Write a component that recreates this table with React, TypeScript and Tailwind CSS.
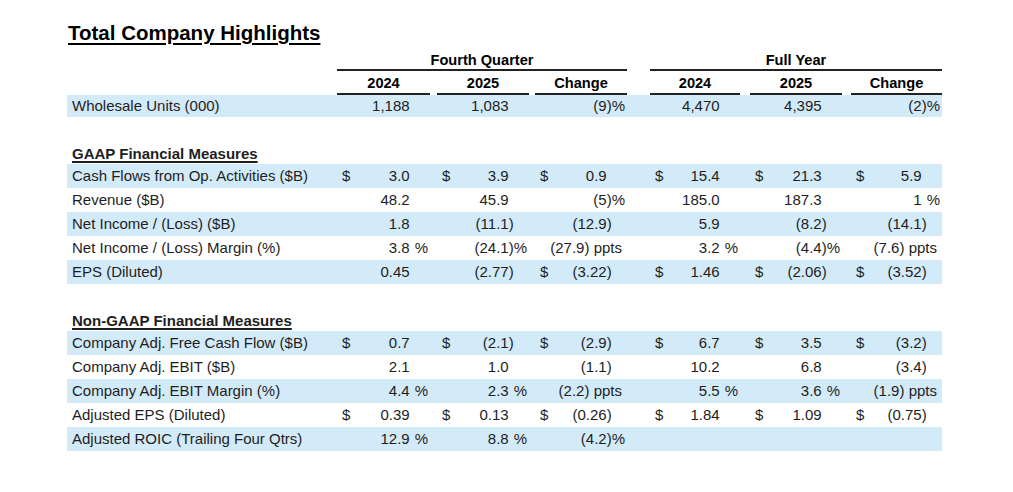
import React from 'react';

const COLS = 'grid grid-cols-[270px_93px_99px_98px_113px_102px_100px]';
const GAPS = ['pl-0', 'pl-[7px]', 'pl-[6px]', 'pl-[23px]', 'pl-[10px]', 'pl-[9px]'];

type Row = { label: string; cells: string[] };

const gaap: Row[] = [
  { label: 'Cash Flows from Op. Activities ($B)', cells: ['$ 3.0', '$ 3.9', '$ 0.9', '$ 15.4', '$ 21.3', '$ 5.9'] },
  { label: 'Revenue ($B)', cells: ['48.2', '45.9', '(5)%', '185.0', '187.3', '1 %'] },
  { label: 'Net Income / (Loss) ($B)', cells: ['1.8', '(11.1)', '(12.9)', '5.9', '(8.2)', '(14.1)'] },
  { label: 'Net Income / (Loss) Margin (%)', cells: ['3.8 %', '(24.1)%', '(27.9) ppts', '3.2 %', '(4.4)%', '(7.6) ppts'] },
  { label: 'EPS (Diluted)', cells: ['0.45', '(2.77)', '$ (3.22)', '$ 1.46', '$ (2.06)', '$ (3.52)'] },
];

const nonGaap: Row[] = [
  { label: 'Company Adj. Free Cash Flow ($B)', cells: ['$ 0.7', '$ (2.1)', '$ (2.9)', '$ 6.7', '$ 3.5', '$ (3.2)'] },
  { label: 'Company Adj. EBIT ($B)', cells: ['2.1', '1.0', '(1.1)', '10.2', '6.8', '(3.4)'] },
  { label: 'Company Adj. EBIT Margin (%)', cells: ['4.4 %', '2.3 %', '(2.2) ppts', '5.5 %', '3.6 %', '(1.9) ppts'] },
  { label: 'Adjusted EPS (Diluted)', cells: ['$ 0.39', '$ 0.13', '$ (0.26)', '$ 1.84', '$ 1.09', '$ (0.75)'] },
  { label: 'Adjusted ROIC (Trailing Four Qtrs)', cells: ['12.9 %', '8.8 %', '(4.2)%', '', '', ''] },
];

function Value({ raw }: { raw: string }) {
  if (!raw) return null;
  let s = raw;
  const dollar = s.startsWith('$');
  if (dollar) s = s.slice(1).trim();
  const ppts = s.endsWith(' ppts');
  if (ppts) s = s.slice(0, -5);
  const pct = s.endsWith('%');
  if (pct) s = s.slice(0, -1).trim();
  const paren = s.endsWith(')');
  if (paren) s = s.slice(0, -1);

  return (
    <div className="flex justify-between whitespace-pre pr-[2px]">
      <span className="pl-[5px]">{dollar ? '$' : ''}</span>
      <span>
        {s}
        <span className={paren ? '' : 'invisible'}>)</span>
        {ppts ? <span className="pr-[3px]"> ppts</span> : <span className={pct ? '' : 'invisible'}>%</span>}
      </span>
    </div>
  );
}

function DataRow({ row, shaded, h = 'h-[24px]' }: { row: Row; shaded: boolean; h?: string }) {
  return (
    <div className={`${COLS} ${h} items-center ${shaded ? 'bg-[#d3eaf8]' : ''}`}>
      <div className="pl-[5px] whitespace-nowrap">{row.label}</div>
      {row.cells.map((c, i) => (
        <div key={i} className={GAPS[i]}>
          <Value raw={c} />
        </div>
      ))}
    </div>
  );
}

function SectionHeader({ title }: { title: string }) {
  return (
    <div className="h-[20px] mt-[27px] flex items-center pl-[5px] font-bold underline decoration-[1.5px] underline-offset-2">
      {title}
    </div>
  );
}

export default function App() {
  return (
    <div
      className="w-[1013px] h-[492px] bg-white pl-[67px] pt-[21px] text-[#1e1e1e] text-[15px] overflow-hidden"
      style={{ fontFamily: '"Liberation Sans", Arial, sans-serif' }}
    >
      <div className="w-[875px]">
        <h1 className="pl-[1px] text-[20.5px] leading-[24px] font-bold text-black underline decoration-2 underline-offset-[3px]">
          Total Company Highlights
        </h1>

        <div className={`${COLS} mt-[6px] font-bold text-black text-[14.6px]`}>
          <div />
          <div className="col-span-3 h-[20px] leading-[18px] text-center border-b-2 border-[#222]">Fourth Quarter</div>
          <div className="col-span-3 pl-[23px]">
            <div className="h-[20px] leading-[18px] text-center border-b-2 border-[#222]">Full Year</div>
          </div>
        </div>

        <div className={`${COLS} font-bold text-black text-[14.6px]`}>
          <div />
          {['2024', '2025', 'Change', '2024', '2025', 'Change'].map((t, i) => (
            <div key={i} className={GAPS[i]}>
              <div className="h-[24px] leading-[24px] text-center border-b-2 border-[#222]">{t}</div>
            </div>
          ))}
        </div>

        <DataRow row={{ label: 'Wholesale Units (000)', cells: ['1,188', '1,083', '(9)%', '4,470', '4,395', '(2)%'] }} shaded h="h-[22px]" />

        <SectionHeader title="GAAP Financial Measures" />
        {gaap.map((r, i) => (
          <DataRow key={r.label} row={r} shaded={i % 2 === 0} />
        ))}

        <SectionHeader title="Non-GAAP Financial Measures" />
        {nonGaap.map((r, i) => (
          <DataRow key={r.label} row={r} shaded={i % 2 === 0} />
        ))}
      </div>
    </div>
  );
}
